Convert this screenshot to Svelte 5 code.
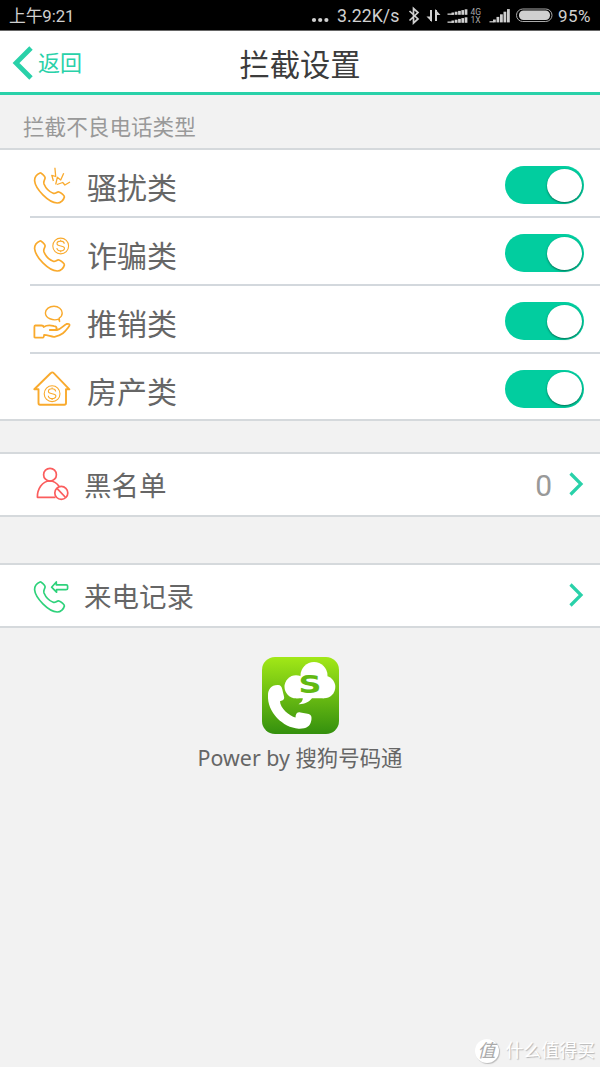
<script>
  let types = $state([
    { icon: "harass", name: "骚扰类", on: true },
    { icon: "fraud", name: "诈骗类", on: true },
    { icon: "promo", name: "推销类", on: true },
    { icon: "house", name: "房产类", on: true },
  ]);
  const blacklistCount = 0;
  const bars = [0, 1, 2, 3, 4];
</script>

{#snippet handset()}
  <path d="M8 6C9 5.4 13.1 9.3 13.1 10.7C13.1 13.2 10.9 14 12 17C13.7 21 17.8 25 21.2 26.2C23.5 27.2 24.6 24.6 27 25C28.8 25.5 32.6 28.5 32.4 30C31.8 32.7 28.8 36 25.2 36C16.5 35.5 3.3 22 2.6 13.8C2.5 10.2 5 7.2 8 6Z" />
{/snippet}

{#snippet dollar(x, y)}
  <g transform="translate({x} {y})" stroke-width="1.1">
    <circle r="7.9" />
    <path d="M3.6-2.2C3.2-6-3.7-5.6-3.7-2.2C-3.7.9 3.8-.8 3.8 2.3C3.8 5.8-3.5 5.8-3.8 2M0-6.2V-4.4M0 4.6V6.2" />
  </g>
{/snippet}

{#snippet chevron()}
  <svg class="chevron" width="16" height="26" viewBox="0 0 16 26">
    <path d="M2.5 2.5L13 13L2.5 23.5" fill="none" stroke="#29d1a9" stroke-width="3.2" />
  </svg>
{/snippet}

<div class="screen">
  <div class="status">
    <span class="time">上午9:21</span>
    <svg class="dots" width="18" height="6" viewBox="0 0 18 6" fill="#d0d0d0">
      <circle cx="3" cy="3" r="2.1" /><circle cx="9.2" cy="3" r="2.1" /><circle cx="15.4" cy="3" r="2.1" />
    </svg>
    <span class="speed">3.22K/s</span>
    <svg width="190" height="20" viewBox="0 0 190 20" class="signals">
      <g fill="none" stroke="#d0d0d0" stroke-width="1.7">
        <path d="M4.5 6L13 14L8.5 18V3.5L13 7.5L4.5 15.5" />
        <path d="M26 5V16M31 16V5" stroke-width="2" />
      </g>
      <path d="M21.5 11.5H27V17ZM30 4V10H35.5Z" fill="#d0d0d0" />
      <g fill="#d0d0d0">
        {#each bars as i}
          <rect x={46.5 + i * 3.3} y={7.5 - i * 0.8} width="2.7" height={2.3 + i * 0.8} />
          <rect x={46.5 + i * 3.3} y={15.5 - i * 0.8} width="2.7" height={2.3 + i * 0.8} />
          <rect x={88 + i * 3.5} y={14.5 - i * 2.6} width="2.8" height={2.9 + i * 2.6} />
        {/each}
        <rect x="42.5" y="8.5" width="6" height="1.3" /><rect x="42.5" y="16.5" width="6" height="1.3" />
        <rect x="84.5" y="16.2" width="4" height="1.2" />
      </g>
      <g class="net" fill="#a8a8a8"><text x="65.5" y="9.5">4G</text><text x="65.5" y="17.8">1X</text></g>
      <rect x="111.5" y="4" width="35.5" height="12.5" rx="6.2" fill="none" stroke="#aaa" />
      <rect x="114" y="5.5" width="31" height="9.5" rx="4.5" fill="#d0d0d0" />
      <text class="battery" x="153" y="16.6" textLength="32.5" fill="#d0d0d0">95%</text>
    </svg>
  </div>

  <header>
    <button class="back">
      <svg width="21" height="34" viewBox="0 0 21 34">
        <path d="M19 2L4 17L19 32" fill="none" stroke="#29d1a9" stroke-width="4.8" />
      </svg>
      <span>返回</span>
    </button>
    <h1>拦截设置</h1>
  </header>

  <h2>拦截不良电话类型</h2>

  <section class="types">
    {#each types as type}
      <div class="row">
        <svg class="icon orange" width="40" height="40" viewBox="0 0 40 40">
          {#if type.icon === "harass"}
            {@render handset()}
            <path stroke-width="1.3" d="M22.9 .7L23.7 9.5L19.8 8.3L21.4 14M31.7 6.3L28.7 13L25.3 10.3L23.7 17.5M25 17.5L30.7 15.5L32.9 18L38 15" />
          {:else if type.icon === "fraud"}
            {@render handset()}
            {@render dollar(28.7, 11)}
          {:else if type.icon === "promo"}
            <path stroke-width="1.4" d="M26.6 16.2C21 18.1 13.5 15.2 13.4 10C13.4 6.2 17.5 3.2 22 3.2C26.5 3.2 30.2 6.2 30.2 10C30.2 12.1 29 14 27.2 15L27.6 18.6Z" />
            <path stroke-width="1.8" d="M3.2 22.5H9.5C11.3 22.5 11.5 23 11.6 24C16 21.3 19 22.4 22 23.1C25.4 23.3 25.4 27 22.5 27H17.8H25C29 26.3 31.3 22.4 34.5 21C38.5 20.1 38 22.5 36.4 24.2C32.7 29 30.5 32 22.5 33.8C20 34.3 15.8 31.9 12.1 31.9C12 34.4 11.8 34.7 10 34.7H3.2C2.3 34.7 2.4 34.2 2.4 33.2V24C2.4 23 2.4 22.6 3.2 22.5Z" />
          {:else}
            <path stroke-width="1.9" d="M2.3 19.3L18.6 3.3C19.8 2 20.7 2 22 3.3L37.4 19.3H34V33C34 34.3 33.6 34.7 32.3 34.7H8C6.9 34.7 6.5 34.3 6.5 33V19.3Z" />
            {@render dollar(20.1, 23.7)}
          {/if}
        </svg>
        <span class="label">{type.name}</span>
        <button class="toggle" class:off={!type.on} aria-label={type.name} onclick={() => (type.on = !type.on)}>
          <i></i>
        </button>
      </div>
    {/each}
  </section>

  <div class="link blacklist">
    <svg class="icon red" width="40" height="40" viewBox="0 0 40 40">
      <circle cx="18" cy="9.7" r="6.4" />
      <path d="M23.5 32.3H5.4C5.1 24.7 10 16 17.7 16C22 16 25.3 18.7 27 21.2" />
      <circle cx="29.3" cy="27.9" r="6.5" /><path d="M25 23.3L33.6 32.5" />
    </svg>
    <span class="label">黑名单</span>
    <span class="count">{blacklistCount}</span>
    {@render chevron()}
  </div>

  <div class="link records">
    <svg class="icon green" width="40" height="40" viewBox="0 0 40 40">
      {@render handset()}
      <path d="M19.6 11.2L24.3 6V8.8H34.2C35.3 8.8 35.6 9.1 35.6 10V12.4C35.6 13.4 35.1 13.7 34 13.7H24.5V16.2Z" />
    </svg>
    <span class="label">来电记录</span>
    {@render chevron()}
  </div>

  <footer>
    <svg width="77" height="77" viewBox="0 0 77 77">
      <defs>
        <linearGradient id="lime" x1="0" y1="0" x2="0" y2="1">
          <stop offset="0" stop-color="#a2e817" /><stop offset="1" stop-color="#34900e" />
        </linearGradient>
      </defs>
      <rect width="77" height="77" rx="13" fill="url(#lime)" />
      <g fill="#fff">
        <circle cx="34" cy="29.8" r="11.5" />
        <circle cx="52" cy="18.5" r="13.5" />
        <circle cx="62" cy="30" r="11.3" />
        <path d="M34 20H62V41.3H50C47 45.3 42 47.5 36.5 47.2C39.5 45.5 40.8 43.5 40.8 41.3H34Z" />
        <path d="M15.5 28C18.5 27.7 19.7 30 20.2 32L22 39.5C22.6 42 21.7 43.3 18 44.2C18 51 27.5 59 33.5 60.5C33.5 56.7 35.5 54.8 38.5 55.5L45.5 56.8C49 57.5 50 59.3 49.4 63C48.3 70 43.5 72 36.5 71.7C21 70.5 5 55.5 6 38C6 32.5 9 28.2 15.5 28Z" />
      </g>
      <text x="36.5" y="35.5" textLength="23" lengthAdjust="spacingAndGlyphs" fill="#62b912" class="s">S</text>
    </svg>
    <p>Power by 搜狗号码通</p>
  </footer>

  <div class="watermark">
    <span class="seal">值</span>
    <span>什么值得买</span>
  </div>
</div>

<style>
  :global(body) {
    background: #f2f2f2;
    font-family: Roboto, "Noto Sans CJK SC", sans-serif;
  }
  .screen {
    height: 1067px;
    display: flex;
    flex-direction: column;
    overflow: hidden;
    position: relative;
  }
  button {
    font: inherit;
    border: none;
    padding: 0;
    background: none;
  }
  .status {
    height: 31px;
    box-sizing: border-box;
    border-bottom: 1px solid #666;
    background: #000;
    color: #d0d0d0;
    display: flex;
    align-items: center;
    padding: 0 5px 0 9px;
    flex: none;
  }
  .time {
    font-size: 16.8px;
    letter-spacing: -0.1px;
    flex: 1;
  }
  .dots {
    margin: 9px 8px 0 0;
  }
  .speed {
    font-size: 17.8px;
    width: 66px;
    white-space: nowrap;
  }
  .signals {
    margin-left: 2px;
    overflow: visible;
  }
  .net {
    font-size: 8.5px;
  }
  .battery {
    font-size: 17px;
  }
  header {
    height: 64px;
    box-sizing: border-box;
    border-bottom: 3px solid #29d1a9;
    background: #fff;
    display: grid;
    grid-template-columns: 1fr auto 1fr;
    align-items: center;
    flex: none;
  }
  .back {
    display: flex;
    align-items: center;
    gap: 5px;
    padding: 2px 0 0 12px;
    color: #29d1a9;
    font-size: 22px;
    line-height: 34px;
  }
  .back span {
    padding-top: 2px;
  }
  h1 {
    margin: 8px 0 0;
    font-size: 30.3px;
    line-height: 40px;
    font-weight: 400;
    color: #3c3c3c;
  }
  h2 {
    margin: 0;
    height: 53px;
    box-sizing: border-box;
    padding: 11px 0 0 23px;
    font-size: 21.6px;
    line-height: 44px;
    font-weight: 400;
    color: #999;
    flex: none;
  }
  .types {
    background: #fff;
    border-top: 2px solid #d5d9dc;
    border-bottom: 2px solid #d5d9dc;
    flex: none;
  }
  .row {
    height: 68px;
    box-sizing: border-box;
    margin-left: 30px;
    padding: 0 16px 0 2px;
    display: flex;
    align-items: center;
    border-bottom: 2px solid #d3d8dd;
  }
  .row:last-child {
    height: 65.4px;
    border: none;
  }
  .icon {
    fill: none;
    stroke-width: 1.7;
    stroke-linejoin: round;
    flex: none;
  }
  .row .icon {
    margin-top: 7px;
  }
  .orange {
    stroke: #f9aa2d;
  }
  .red {
    stroke: #fb5d5d;
  }
  .green {
    stroke: #2ed27b;
  }
  .label {
    flex: 1;
    color: #666;
  }
  .row .label {
    padding: 12px 0 0 15px;
    font-size: 30px;
    line-height: 40px;
  }
  .toggle {
    width: 79px;
    height: 38px;
    border-radius: 19px;
    background: #02cd9f;
    display: flex;
    align-items: center;
    justify-content: flex-end;
    padding: 0 2px;
    margin-top: 4px;
  }
  .toggle.off {
    background: #ccc;
    justify-content: flex-start;
  }
  .toggle i {
    width: 35px;
    height: 33px;
    border-radius: 50%;
    background: #fff;
    box-shadow: 0 1px 2px rgba(0, 70, 50, 0.7);
  }
  .link {
    height: 65px;
    box-sizing: border-box;
    border-top: 2px solid #d5d9dc;
    border-bottom: 2px solid #d5d9dc;
    background: #fff;
    display: flex;
    align-items: center;
    padding: 0 16px 0 32px;
    flex: none;
  }
  .blacklist {
    margin-top: 31px;
  }
  .records {
    margin-top: 46px;
  }
  .link .label {
    padding: 4px 0 0 12px;
    font-size: 27.5px;
    line-height: 40px;
  }
  .chevron {
    margin-bottom: 1px;
  }
  .count {
    font-size: 30px;
    color: #999;
    padding: 2px 16px 0 0;
  }
  footer {
    margin-top: 29px;
    display: flex;
    flex-direction: column;
    align-items: center;
  }
  .s {
    font: bold 25px "DejaVu Sans", sans-serif;
  }
  p {
    margin: 8px 0 0;
    font: 21.4px/32px "Noto Sans", "Noto Sans CJK SC", sans-serif;
    color: #666;
  }
  .watermark {
    position: absolute;
    right: 5px;
    bottom: 4px;
    display: flex;
    align-items: center;
    gap: 7px;
    font-size: 17.9px;
    line-height: 25px;
    color: #fff;
    text-shadow: 1px 1px 1px #b5b5b5;
  }
  .seal {
    width: 24px;
    height: 24px;
    border-radius: 50%;
    background: #fff;
    box-shadow: 1px 1px 1px #bbb;
    color: #aaa;
    text-align: center;
    text-shadow: none;
    font-style: italic;
    line-height: 23px;
  }
</style>
